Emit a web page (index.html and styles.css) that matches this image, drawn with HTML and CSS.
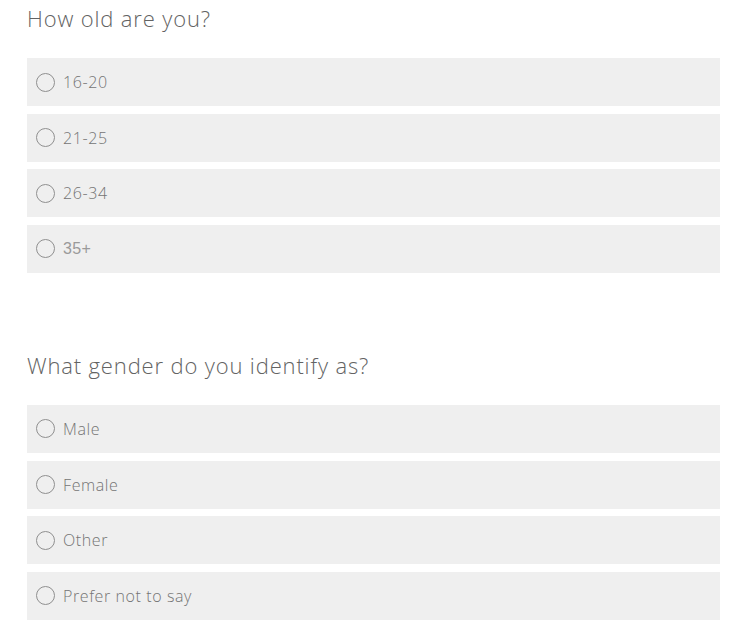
FILE: index.html
```html
<!DOCTYPE html>
<html lang="en">
<head>
<meta charset="utf-8">
<title>Survey</title>
<link rel="stylesheet" href="styles.css">
</head>
<body>
<main class="survey">
  <section class="question">
    <h2 class="question-title">How old are you?</h2>
    <div class="options">
      <label class="option"><span class="radio"></span><span class="option-text">16-20</span></label>
      <label class="option"><span class="radio"></span><span class="option-text">21-25</span></label>
      <label class="option"><span class="radio"></span><span class="option-text">26-34</span></label>
      <label class="option"><span class="radio"></span><span class="option-text alt">35+</span></label>
    </div>
  </section>
  <section class="question second">
    <h2 class="question-title">What gender do you identify as?</h2>
    <div class="options">
      <label class="option"><span class="radio"></span><span class="option-text">Male</span></label>
      <label class="option"><span class="radio"></span><span class="option-text">Female</span></label>
      <label class="option"><span class="radio"></span><span class="option-text">Other</span></label>
      <label class="option"><span class="radio"></span><span class="option-text">Prefer not to say</span></label>
    </div>
  </section>
</main>
</body>
</html>
```
FILE: styles.css
```css
html, body {
  margin: 0;
  padding: 0;
  background: #ffffff;
}
body {
  font-family: "Open Sans", "Liberation Sans", sans-serif;
  font-weight: 300;
}
.survey {
  padding: 2px 27px 0 27px;
}
.question-title {
  margin: 0;
  font-size: 22px;
  line-height: 33px;
  font-weight: 300;
  letter-spacing: 0.85px;
  color: #636363;
}
.options {
  margin-top: 23px;
  display: flex;
  flex-direction: column;
  gap: 7.67px;
}
.second {
  margin-top: 76px;
}
.option {
  display: flex;
  align-items: center;
  height: 48px;
  background: #efefef;
  padding-left: 9px;
  box-sizing: border-box;
}
.radio {
  width: 19px;
  height: 19px;
  box-sizing: border-box;
  border: 1px solid #8f8f8f;
  border-radius: 50%;
  flex: 0 0 auto;
}
.option-text {
  margin-left: 8px;
  font-size: 16px;
  letter-spacing: 0.6px;
  color: #747474;
}
.option-text.alt {
  font-family: "Liberation Sans", Arial, sans-serif;
  font-weight: 400;
  letter-spacing: 0.3px;
  color: #9a9a9a;
}
```
